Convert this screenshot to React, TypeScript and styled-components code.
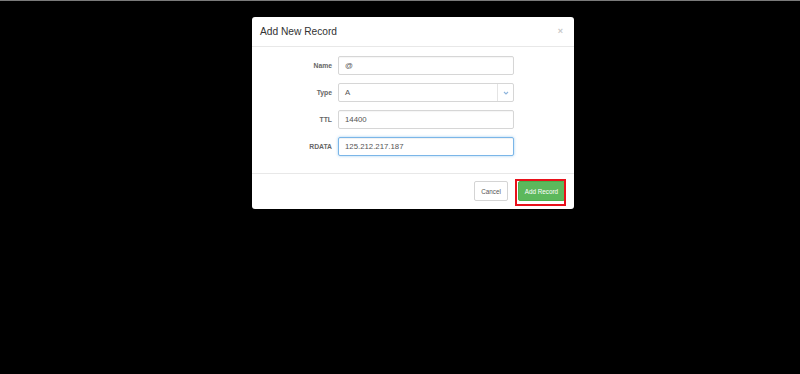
import { useState } from "react";
import styled, { createGlobalStyle } from "styled-components";

const GlobalStyle = createGlobalStyle`
  html, body {
    margin: 0;
    padding: 0;
    background: #000;
    font-family: "Liberation Sans", Arial, sans-serif;
  }
  #root {
    width: 800px;
    height: 374px;
    overflow: hidden;
  }
`;

type Field = {
  label: string;
  value: string;
  kind: "text" | "select";
  focused?: boolean;
};

const fields: Field[] = [
  { label: "Name", value: "@", kind: "text" },
  { label: "Type", value: "A", kind: "select" },
  { label: "TTL", value: "14400", kind: "text" },
  { label: "RDATA", value: "125.212.217.187", kind: "text", focused: true },
];

export default function App() {
  const [values, setValues] = useState(fields.map((f) => f.value));

  const update = (idx: number, v: string) =>
    setValues((prev) => prev.map((p, i) => (i === idx ? v : p)));

  return (
    <Backdrop>
      <GlobalStyle />
      <Modal>
        <Header>
          <Title>Add New Record</Title>
          <Close aria-label="Close">×</Close>
        </Header>
        <Body>
          {fields.map((field, idx) => (
            <Row key={field.label}>
              <Label>{field.label}</Label>
              {field.kind === "select" ? (
                <SelectBox>
                  <SelectValue>{values[idx]}</SelectValue>
                  <Caret>
                    <svg width="6" height="4" viewBox="0 0 6 4">
                      <path
                        d="M1 1 L3 3 L5 1"
                        fill="none"
                        stroke="#8db4dc"
                        strokeWidth="1.1"
                      />
                    </svg>
                  </Caret>
                </SelectBox>
              ) : (
                <Input
                  $focused={field.focused}
                  value={values[idx]}
                  onChange={(e) => update(idx, e.target.value)}
                />
              )}
            </Row>
          ))}
        </Body>
        <Footer>
          <CancelButton type="button">Cancel</CancelButton>
          <Highlight>
            <AddButton type="button">Add Record</AddButton>
          </Highlight>
        </Footer>
      </Modal>
    </Backdrop>
  );
}

const Backdrop = styled.div`
  box-sizing: border-box;
  width: 800px;
  height: 374px;
  background: #000;
  border-top: 1px solid #7a7a7a;
  padding: 16px 0 0 252px;
`;

const Modal = styled.div`
  width: 322px;
  background: #fff;
  border-radius: 3px;
  box-shadow: 0 2px 8px rgba(0, 0, 0, 0.5);
`;

const Header = styled.div`
  display: flex;
  align-items: center;
  justify-content: space-between;
  height: 29px;
  padding: 0 11px 0 8px;
  border-bottom: 1px solid #e8e8e8;
`;

const Title = styled.h4`
  margin: 0;
  font-size: 10.2px;
  font-weight: normal;
  color: #333;
`;

const Close = styled.span`
  font-size: 9px;
  font-weight: bold;
  color: #c8c8c8;
  line-height: 1;
`;

const Body = styled.div`
  display: flex;
  flex-direction: column;
  gap: 8px;
  padding: 9px 0 17px;
  border-bottom: 1px solid #e8e8e8;
`;

const Row = styled.div`
  display: flex;
  align-items: center;
  gap: 6px;
`;

const Label = styled.label`
  width: 80px;
  text-align: right;
  font-size: 6.8px;
  font-weight: bold;
  color: #666;
`;

const Input = styled.input<{ $focused?: boolean }>`
  box-sizing: border-box;
  width: 176px;
  height: 19px;
  padding: 0 6px;
  margin: 0;
  font-family: "Liberation Sans", Arial, sans-serif;
  font-size: 7.8px;
  color: #555;
  background: #fff;
  border: 1px solid ${(p) => (p.$focused ? "#7bb6e8" : "#d6d6d6")};
  border-radius: 2px;
  box-shadow: ${(p) =>
    p.$focused
      ? "inset 0 1px 1px rgba(0,0,0,.06), 0 0 3px rgba(102,175,233,.6)"
      : "inset 0 1px 1px rgba(0,0,0,.04)"};
  outline: none;
`;

const SelectBox = styled.div`
  box-sizing: border-box;
  display: flex;
  align-items: stretch;
  width: 176px;
  height: 19px;
  border: 1px solid #d6d6d6;
  border-radius: 2px;
  background: #fff;
`;

const SelectValue = styled.span`
  flex: 1;
  display: flex;
  align-items: center;
  padding: 0 6px;
  font-size: 7.8px;
  color: #555;
`;

const Caret = styled.span`
  display: flex;
  align-items: center;
  justify-content: center;
  width: 15px;
  border-left: 1px solid #e4e4e4;
`;

const Footer = styled.div`
  display: flex;
  justify-content: flex-end;
  align-items: center;
  gap: 10px;
  padding: 7px 9px 8px;
`;

const BaseButton = styled.button`
  box-sizing: border-box;
  height: 20px;
  margin: 0;
  border-radius: 2px;
  font-family: "Liberation Sans", Arial, sans-serif;
  font-size: 6.3px;
  cursor: pointer;
`;

const CancelButton = styled(BaseButton)`
  width: 34px;
  padding: 0;
  background: #fff;
  color: #555;
  border: 1px solid #d4d4d4;
`;

const AddButton = styled(BaseButton)`
  width: 47px;
  padding: 0;
  background: #5cb85c;
  color: #fff;
  border: 1px solid #4cae4c;
`;

const Highlight = styled.span`
  position: relative;
  display: flex;

  &::after {
    content: "";
    position: absolute;
    top: -2px;
    left: -3px;
    right: -1px;
    bottom: -5px;
    border: 2px solid #e8101a;
    pointer-events: none;
  }
`;
